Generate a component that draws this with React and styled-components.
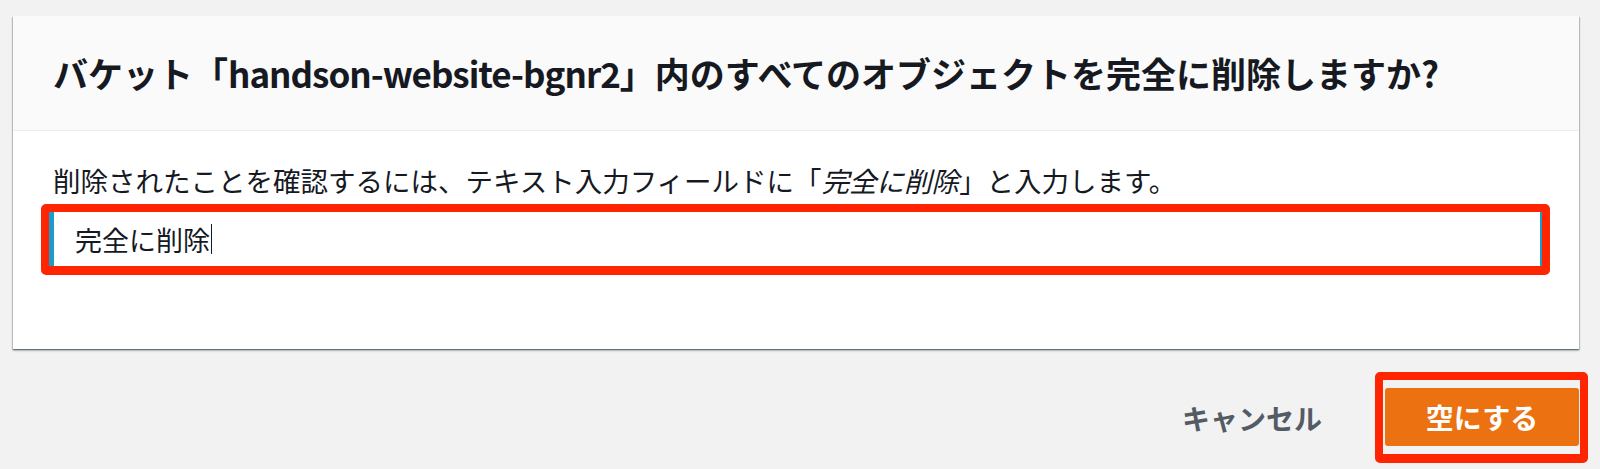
import React from 'react';
import styled, { createGlobalStyle } from 'styled-components';

const GlobalStyle = createGlobalStyle`
  html, body {
    margin: 0;
    padding: 0;
    background: #f2f2f2;
  }
  body {
    font-family: "Noto Sans CJK JP", "Noto Sans", "Liberation Sans", sans-serif;
    color: #16191f;
  }
`;

const Page = styled.div`
  width: 1600px;
  height: 469px;
  box-sizing: border-box;
  padding: 16px 21px 0 13px;
  overflow: hidden;
`;

const Card = styled.section`
  background: #fff;
  box-shadow: 0 1px 1px 0 rgba(0, 28, 36, 0.3), 1px 1px 1px 0 rgba(0, 28, 36, 0.15),
    -1px 1px 1px 0 rgba(0, 28, 36, 0.15), 0 2px 2px 0 rgba(0, 28, 36, 0.2);
`;

const Header = styled.header`
  height: 114px;
  display: flex;
  align-items: center;
  padding: 0 40px;
  background: #fafafa;
  border-bottom: 1px solid #eaeded;
`;

const Title = styled.h2`
  margin: 0;
  font-size: 35px;
  font-weight: 700;
  line-height: 1.2;
  color: #16191f;
  white-space: nowrap;
`;

// the bucket name is set a little tighter than the japanese text
const BucketName = styled.span`
  letter-spacing: -1px;
`;

const Body = styled.div`
  padding: 30px 29px 74px 40px;
`;

const Label = styled.p`
  margin: 0 0 5px;
  font-size: 27.5px;
  line-height: 38px;
  color: #16191f;
  white-space: nowrap;

  em {
    font-style: italic;
  }
`;

// red annotation frame drawn over the screenshot
const Highlight = styled.div`
  border: 8px solid #fe2500;
  border-bottom-width: 9px;
  border-radius: 5px;
  padding: ${(p) => p.$pad || '0'};
  margin: ${(p) => p.$offset || '0'};
`;

const Field = styled.div`
  height: 54px;
  display: flex;
  align-items: center;
  padding-left: 21px;
  border-left: 5px solid #1a9bc9;
  border-right: 2px solid #1a9bc9;
  background: #fff;
  font-size: 27px;
  color: #16191f;
`;

const Caret = styled.span`
  display: inline-block;
  width: 1px;
  height: 30px;
  margin-left: 1px;
  background: #16191f;
`;

const Footer = styled.div`
  display: flex;
  justify-content: flex-end;
  align-items: center;
  margin-top: 23px;
`;

const CancelButton = styled.button`
  border: none;
  background: none;
  padding: 0;
  margin-right: 53px;
  font-family: inherit;
  font-size: 28px;
  font-weight: 700;
  color: #545b64;
  cursor: pointer;
`;

const PrimaryButton = styled.button`
  display: block;
  width: 194px;
  height: 58px;
  border: none;
  border-radius: 3px;
  background: #ec7211;
  color: #fff;
  font-family: inherit;
  font-size: 28px;
  font-weight: 700;
  cursor: pointer;
`;

export default function App() {
  return (
    <>
      <GlobalStyle />
      <Page>
        <Card>
          <Header>
            <Title>
              バケット「<BucketName>handson-website-bgnr2</BucketName>」内のすべてのオブジェクトを完全に削除しますか?
            </Title>
          </Header>
          <Body>
            <Label>
              削除されたことを確認するには、テキスト入力フィールドに「<em>完全に削除</em>」と入力します。
            </Label>
            <Highlight $offset="0 0 0 -12px">
              <Field>
                完全に削除
                <Caret />
              </Field>
            </Highlight>
          </Body>
        </Card>
        <Footer>
          <CancelButton>キャンセル</CancelButton>
          <Highlight $pad="8px 1px 8px 2px" $offset="0 -9px 0 0">
            <PrimaryButton>空にする</PrimaryButton>
          </Highlight>
        </Footer>
      </Page>
    </>
  );
}
